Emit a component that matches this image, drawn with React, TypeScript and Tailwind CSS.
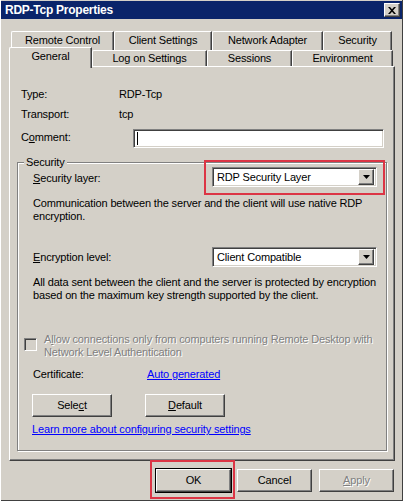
import React from 'react';

const raised = 'border-t border-l border-white border-r border-b border-r-[#404040] border-b-[#404040] shadow-[inset_-1px_-1px_0_#808080]';
const sunken = 'border-t border-l border-[#808080] border-r border-b border-r-white border-b-white shadow-[inset_1px_1px_0_#404040,inset_-1px_-1px_0_#d4d0c8]';

function Tab({ label, w, active }: { label: string; w: number; active?: boolean }) {
    return (
        <div
            className={`flex items-center justify-center bg-[#d4d0c8] rounded-tl-[2px] border-t border-l border-white border-r border-r-[#404040] shadow-[inset_-1px_0_0_#808080] ${active ? 'relative -top-[3px] h-[21px] z-10 pb-[4px]' : 'h-full pb-[1px]'}`}
            style={{ width: w }}
        >
            {label}
        </div>
    );
}

function Combo({ value }: { value: string }) {
    return (
        <div className={`w-[165px] h-[20px] bg-white flex items-center justify-between pl-[4px] pr-[2px] ${sunken}`}>
            <span>{value}</span>
            <div className={`w-[16px] h-[16px] bg-[#d4d0c8] flex items-center justify-center ${raised}`}>
                <svg width="7" height="4" viewBox="0 0 7 4">
                    <path d="M0 0h7L3.5 4z" fill="#000" />
                </svg>
            </div>
        </div>
    );
}

function Btn({ children, w = 75, className = '' }: { children: React.ReactNode; w?: number; className?: string }) {
    return (
        <div
            className={`h-[23px] bg-[#d4d0c8] flex items-center justify-center ${raised} ${className}`}
            style={{ width: w }}
        >
            {children}
        </div>
    );
}

export default function App() {
    return (
        <div className="w-[403px] h-[501px] bg-[#d4d0c8] flex flex-col font-['Liberation_Sans',Arial,sans-serif] text-[11px] leading-[13px] tracking-[-0.15px] text-black shadow-[inset_1px_0_0_#fff,inset_-1px_-1px_0_#404040] overflow-hidden">
            {/* Title bar */}
            <div className="mt-[1px] mx-[1px] h-[18px] bg-[#0a246a] flex items-center justify-between pl-[4px] pr-[2px]">
                <span className="text-white font-bold text-[12px] tracking-[-0.25px]">RDP-Tcp Properties</span>
                <div className={`w-[16px] h-[14px] bg-[#d4d0c8] flex items-center justify-center ${raised}`}>
                    <svg width="8" height="7" viewBox="0 0 8 7">
                        <path d="M0 0h2l2 2.3L6 0h2L5 3.5 8 7H6L4 4.7 2 7H0l3-3.5z" fill="#000" />
                    </svg>
                </div>
            </div>

            {/* Tabs */}
            <div className="mt-[12px] ml-[11px] h-[19px] flex">
                <Tab label="Remote Control" w={103} />
                <Tab label="Client Settings" w={98} />
                <Tab label="Network Adapter" w={111} />
                <Tab label="Security" w={69} />
            </div>
            <div className="ml-[9px] h-[16px] flex">
                <Tab label="General" w={83} active />
                <Tab label="Log on Settings" w={115} />
                <Tab label="Sessions" w={85} />
                <Tab label="Environment" w={101} />
            </div>

            {/* Panel */}
            <div className="ml-[9px] w-[386px] h-[395px] border-t border-l border-white border-r border-b border-r-[#404040] border-b-[#404040] shadow-[inset_-1px_-1px_0_#808080] flex flex-col">
                <div className="mt-[21px] ml-[11px] flex h-[13px]">
                    <span className="w-[98px]">Type:</span>
                    <span>RDP-Tcp</span>
                </div>
                <div className="mt-[7px] ml-[11px] flex h-[13px]">
                    <span className="w-[98px]">Transport:</span>
                    <span>tcp</span>
                </div>
                <div className="mt-[8px] ml-[11px] flex items-center h-[19px]">
                    <span className="w-[112px] -mt-[3px]">C<u>o</u>mment:</span>
                    <div className={`w-[251px] h-[19px] bg-white flex items-center pl-[3px] ${sunken}`}>
                        <div className="w-[1px] h-[13px] bg-black" />
                    </div>
                </div>

                {/* Security group */}
                <div className="relative mt-[14px] ml-[7px] w-[370px] h-[289px] border border-[#808080] shadow-[inset_1px_1px_0_#fff,1px_1px_0_#fff] flex flex-col pl-[15px]">
                    <span className="absolute -top-[7px] left-[6px] px-[2px] bg-[#d4d0c8]">Security</span>

                    <div className="mt-[4px] flex items-center justify-between pr-[9px] h-[20px]">
                        <span className="mt-[2px]">
                            <u>S</u>ecurity layer:
                        </span>
                        <div className="relative">
                            <Combo value="RDP Security Layer" />
                            <div className="absolute -left-[8px] -top-[7px] -right-[8px] -bottom-[8px] border-2 border-[#dc3545]" />
                        </div>
                    </div>
                    <p className="mt-[10px] whitespace-nowrap">
                        Communication between the server and the client will use native RDP
                        <br />
                        encryption.
                    </p>

                    <div className="mt-[24px] flex items-center justify-between pr-[9px] h-[20px]">
                        <span>
                            <u>E</u>ncryption level:
                        </span>
                        <Combo value="Client Compatible" />
                    </div>
                    <p className="mt-[9px] whitespace-nowrap">
                        All data sent between the client and the server is protected by encryption
                        <br />
                        based on the maximum key strength supported by the client.
                    </p>

                    <div className="mt-[31px] -ml-[9px] flex">
                        <div className={`mt-[5px] w-[13px] h-[13px] bg-[#d4d0c8] shrink-0 ${sunken}`} />
                        <p className="ml-[7px] text-[#808080] [text-shadow:1px_1px_0_#fff] whitespace-nowrap">
                            A<u>l</u>low connections only from computers running Remote Desktop with
                            <br />
                            Network Level Authentication
                        </p>
                    </div>

                    <div className="mt-[9px] flex h-[13px]">
                        <span className="w-[114px]">Certificate:</span>
                        <span className="text-[#0000ff] underline">Auto generated</span>
                    </div>

                    <div className="mt-[13px] -ml-[1px] flex gap-[33px]">
                        <Btn w={80}>
                            Sele<u>c</u>t
                        </Btn>
                        <Btn w={80}>
                            <u>D</u>efault
                        </Btn>
                    </div>

                    <span className="mt-[6px] -ml-[1px] text-[#0000ff] underline">
                        Learn more about configuring security settings
                    </span>
                </div>
            </div>

            {/* Footer buttons */}
            <div className="mt-[8px] mr-[9px] flex justify-end gap-[6px]">
                <div className="relative">
                    <Btn className="outline outline-1 outline-black">OK</Btn>
                    <div className="absolute -left-[6px] -top-[9px] -right-[4px] -bottom-[7px] border-2 border-[#dc3545]" />
                </div>
                <Btn>Cancel</Btn>
                <Btn className="ml-[1px] text-[#808080] [text-shadow:1px_1px_0_#fff]">
                    <u>A</u>pply
                </Btn>
            </div>
        </div>
    );
}
